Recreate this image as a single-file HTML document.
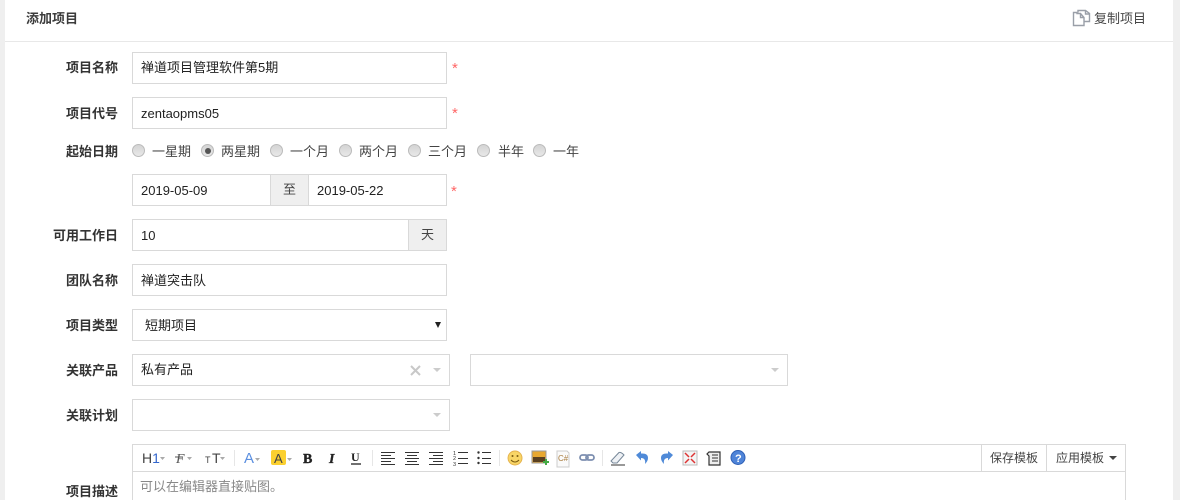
<!DOCTYPE html>
<html><head><meta charset="utf-8"><style>
*{box-sizing:border-box}
html,body{margin:0;padding:0;width:1180px;height:500px;overflow:hidden}
#w{width:1180px;height:500px;overflow:hidden;background:#efefef;position:relative;font-family:"Liberation Sans","Noto Sans CJK SC",sans-serif;font-size:13px;color:#333}
.abs,.panel,.inp,.lbl,.star,.r,.t{position:absolute}
.panel{left:5px;top:0;width:1168px;height:500px;background:#fff}
.hr{position:absolute;left:5px;top:41px;width:1168px;height:1px;background:#e8e8e8}
.inp{border:1px solid #d9d9d9;background:#fff;height:32px;line-height:31px;padding-left:8px;color:#222;white-space:nowrap}
.lbl{left:20px;width:98px;text-align:right;font-weight:bold;line-height:20px;color:#333;white-space:nowrap}
.star{color:#f66;font-size:15px;line-height:16px}
.r{width:13px;height:13px;border-radius:50%;border:1px solid #bbb;background:linear-gradient(#d4d4d4,#e8e8e8);top:144px}
.r.c::after{content:"";position:absolute;left:2.500px;top:2.500px;width:6px;height:6px;border-radius:50%;background:#555}
.t{top:142px;line-height:20px;color:#444;white-space:nowrap}
.add{background:#efefef;text-align:center;padding:0;color:#444}
.car{position:absolute;width:0;height:0;border-left:4px solid transparent;border-right:4px solid transparent;border-top:4px solid #ccc}
.tb{position:absolute;top:0;left:0}
.sep{position:absolute;top:450px;width:1px;height:16px;background:#e6e6e6}
</style></head><body><div id="w">
<div class="panel"></div><div class="hr"></div>
<div class="abs" style="left:26px;top:9px;font-weight:bold;line-height:20px;color:#3c3c3c">添加项目</div>
<svg class="abs" style="left:1072px;top:9px" width="19" height="18" viewBox="0 0 19 18" fill="none" stroke="#9a9fa8" stroke-width="1.400"><path d="M5 3.500H1.500V16.500H12V8.500L8.500 4.500H5zM8.500 4.500V8.500H12"/><path d="M6 3.500V1.500H13.500L17.500 4.500V12.500H12.500"/><path d="M13.500 1.500V5H17.500"/></svg>
<div class="abs" style="left:1094px;top:9px;line-height:20px;color:#444">复制项目</div>

<div class="lbl" style="top:58px">项目名称</div>
<div class="inp" style="left:132px;top:52px;width:315px;line-height:30px">禅道项目管理软件第5期</div>
<div class="star" style="left:452px;top:61px">*</div>
<div class="lbl" style="top:104px">项目代号</div>
<div class="inp" style="left:132px;top:97px;width:315px">zentaopms05</div>
<div class="star" style="left:452px;top:106px">*</div>
<div class="lbl" style="top:142px">起始日期</div>
<div class="r" style="left:132px"></div><div class="t" style="left:152px">一星期</div>
<div class="r c" style="left:201px"></div><div class="t" style="left:221px">两星期</div>
<div class="r" style="left:270px"></div><div class="t" style="left:290px">一个月</div>
<div class="r" style="left:339px"></div><div class="t" style="left:359px">两个月</div>
<div class="r" style="left:408px"></div><div class="t" style="left:428px">三个月</div>
<div class="r" style="left:477px"></div><div class="t" style="left:498px">半年</div>
<div class="r" style="left:533px"></div><div class="t" style="left:553px">一年</div>

<div class="inp" style="left:132px;top:174px;width:139px">2019-05-09</div>
<div class="inp add" style="left:270px;top:174px;width:39px;line-height:29px">至</div>
<div class="inp" style="left:308px;top:174px;width:139px">2019-05-22</div>
<div class="star" style="left:451px;top:184px">*</div>

<div class="lbl" style="top:226px">可用工作日</div>
<div class="inp" style="left:132px;top:219px;width:277px">10</div>
<div class="inp add" style="left:408px;top:219px;width:39px;line-height:29px">天</div>
<div class="lbl" style="top:271px">团队名称</div>
<div class="inp" style="left:132px;top:264px;width:315px">禅道突击队</div>
<div class="lbl" style="top:316px">项目类型</div>
<div class="inp" style="left:132px;top:309px;width:315px;padding-left:12px">短期项目</div>
<div class="abs" style="left:435px;top:322px;width:0;height:0;border-left:3.500px solid transparent;border-right:3.500px solid transparent;border-top:6px solid #222"></div>
<div class="lbl" style="top:361px">关联产品</div>
<div class="inp" style="left:132px;top:354px;width:318px;line-height:29px">私有产品</div>
<svg class="abs" style="left:410px;top:365px" width="11" height="11" stroke="#c8c8c8" stroke-width="2"><path d="M1 1L10 10M10 1L1 10"/></svg>
<div class="car" style="left:433px;top:368px"></div>
<div class="inp" style="left:470px;top:354px;width:318px"></div>
<div class="car" style="left:771px;top:368px"></div>
<div class="lbl" style="top:406px">关联计划</div>
<div class="inp" style="left:132px;top:399px;width:318px"></div>
<div class="car" style="left:433px;top:413px"></div>
<div class="lbl" style="top:482px">项目描述</div>

<div class="abs" style="left:132px;top:444px;width:994px;height:70px;border:1px solid #d9d9d9;background:#fff"></div>
<div class="abs" style="left:133px;top:471px;width:992px;height:1px;background:#d9d9d9"></div>
<div class="abs" style="left:981px;top:445px;width:1px;height:26px;background:#d9d9d9"></div>
<div class="abs" style="left:1046px;top:445px;width:1px;height:26px;background:#d9d9d9"></div>
<div class="abs" style="left:990px;top:448px;line-height:20px;font-size:12px;color:#444">保存模板</div>
<div class="abs" style="left:1056px;top:448px;line-height:20px;font-size:12px;color:#444">应用模板</div>
<div class="car" style="left:1109px;top:456px;border-top-color:#444"></div>
<div class="abs" style="left:140px;top:477px;line-height:20px;color:#888">可以在编辑器直接贴图。</div>

<div class="sep" style="left:234px"></div><div class="sep" style="left:372px"></div><div class="sep" style="left:499px"></div><div class="sep" style="left:602px"></div>
<svg class="tb" width="1180" height="500">
<g font-family="Liberation Sans" fill="#444">
<text x="142" y="463" font-size="14">H<tspan fill="#36c">1</tspan></text>
<text x="176" y="463" font-size="14" font-family="Liberation Serif" font-style="italic" fill="#555">F</text>
<path d="M175 457H183" stroke="#555"/>
<text x="205" y="463" font-size="9">T</text><text x="212" y="463" font-size="14">T</text>
<text x="244" y="463" font-size="15" fill="#5b8fe0">A</text>
<rect x="271" y="450" width="15" height="15" rx="2" fill="#fbd030"/>
<text x="274" y="463" font-size="13">A</text>
<text x="303" y="463" font-size="14" font-family="Liberation Serif" font-weight="bold" fill="#222" stroke="#222" stroke-width=".4">B</text>
<text x="329" y="463" font-size="14" font-family="Liberation Serif" font-weight="bold" font-style="italic" fill="#222" stroke="#222" stroke-width=".3">I</text>
<text x="351" y="461" font-size="12" font-family="Liberation Serif" font-weight="bold" fill="#222">U</text>
</g>
<path d="M351 464H361" stroke="#222" stroke-width="1.300"/>
<g fill="#aaa"><path d="M160 457h5l-2.500 3zM187 457h5l-2.500 3zM220 457h5l-2.500 3zM255 458h5l-2.500 3zM287 458h5l-2.500 3z"/></g>
<g stroke="#333" stroke-width="1" fill="none">
<path d="M381 452.500H395M381 455.500H391M381 458.500H395M381 461.500H391M381 464.500H395"/>
<path d="M405 452.500H419M407 455.500H417M405 458.500H419M407 461.500H417M405 464.500H419"/>
<path d="M429 452.500H443M433 455.500H443M429 458.500H443M433 461.500H443M429 464.500H443"/>
<path d="M458 452.500H468M458 458.500H468M458 463.500H468"/>
<path d="M482 452.500H491M482 458.500H491M482 463.500H491"/>
</g>
<text x="453" y="455" font-size="5.500" fill="#333">1</text><text x="453" y="460" font-size="5.500" fill="#333">2</text><text x="453" y="466" font-size="5.500" fill="#333">3</text>
<circle cx="478.500" cy="452.500" r="1.200" fill="#333"/><circle cx="478.500" cy="458" r="1.200" fill="#333"/><circle cx="478.500" cy="463" r="1.200" fill="#333"/>
<circle cx="515" cy="458" r="7" fill="#f8d566" stroke="#e5b34e"/><circle cx="512.500" cy="456" r="1" fill="#7a5a10"/><circle cx="517.500" cy="456" r="1" fill="#7a5a10"/><path d="M511 460Q515 464 519 460" stroke="#7a5a10" fill="none"/>
<rect x="532" y="451" width="14" height="12" fill="#e8a830" stroke="#999"/><rect x="533" y="457" width="12" height="5" fill="#5a4020"/><path d="M543 462H549M546 459V465" stroke="#4a4" stroke-width="2"/>
<path d="M557 451H567L569 453V467H557Z" fill="#fafafa" stroke="#ccc"/><text x="558" y="461" font-size="8" fill="#a87b3c" font-family="Liberation Sans">C#</text>
<g fill="none" stroke="#7d8fb0" stroke-width="1.800"><rect x="580" y="455" width="8" height="5" rx="2.500"/><rect x="586" y="455" width="8" height="5" rx="2.500"/></g>
<path d="M611 461L619 452.500Q621 452 624 455L617 463H613Z" fill="#eef1f5" stroke="#789"/><path d="M611 465H625" stroke="#333"/>
<path d="M636 455L641 451V453.500Q648 453 648 458Q648 461 645 464Q646 458 641 458V460.500Z" fill="#4f8ad8"/>
<path d="M673 455L668 451V453.500Q661 453 661 458Q661 461 664 464Q663 458 668 458V460.500Z" fill="#4f8ad8"/>
<rect x="683" y="451" width="14" height="14" fill="#f4f4f4" stroke="#bbb"/><path d="M685 453L689 457M695 453L691 457M685 463L689 459M695 463L691 459" stroke="#d33" stroke-width="1.500"/>
<path d="M709 452H720V465H709V456L707 454Z" fill="#eee" stroke="#333" stroke-width="1.200"/><path d="M712 455H718M712 458H718M712 461H718" stroke="#333"/>
<circle cx="738" cy="457.500" r="7" fill="#4f84d8" stroke="#2d5fb5"/><text x="735" y="462" font-size="11" font-weight="bold" fill="#fff" font-family="Liberation Sans">?</text>
</svg>
</div></body></html>
